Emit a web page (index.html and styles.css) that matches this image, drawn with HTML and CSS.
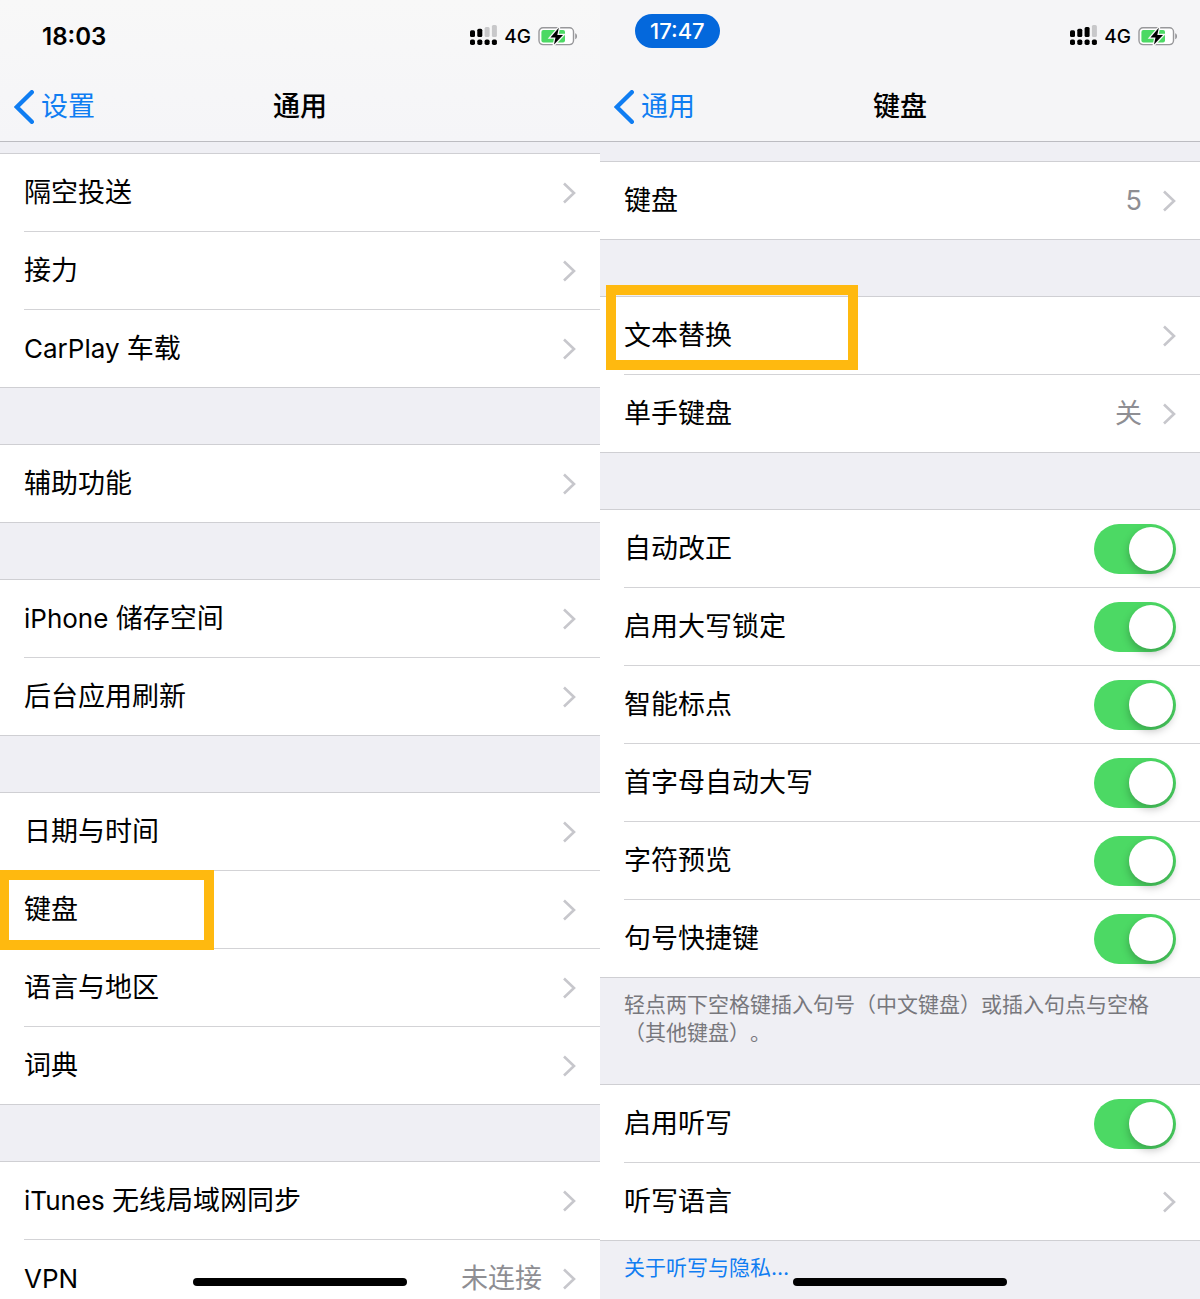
FILE: index.html
```
<!DOCTYPE html>
<html lang="zh-CN">
<head>
  <meta charset="UTF-8">
  <meta name="viewport" content="width=device-width, initial-scale=1">
  <title>通用 / 键盘</title>
  <link rel="stylesheet" href="styles.css">
</head>
<body>
  <!-- shared icons -->
  <svg class="sprite" aria-hidden="true">
    <symbol id="chevron" viewBox="0 0 14 22">
      <path d="M2 1.500l10 9.500-10 9.500" fill="none" stroke="currentColor" stroke-width="2.6"/>
    </symbol>
    <symbol id="back" viewBox="0 0 20 34">
      <path d="M17.8 2.2L2.8 17l15 14.8" fill="none" stroke="currentColor" stroke-width="4.4" stroke-linecap="round"/>
    </symbol>
    <symbol id="battery" viewBox="0 0 40 20">
      <rect x="1" y="1.8" width="34.5" height="16.8" rx="4" fill="#fff" stroke="#98989b" stroke-width="1.4"/>
      <path d="M37.200 7.2c1.400.6 1.800 1.7 1.800 3s-.4 2.400-1.800 3z" fill="#98989b"/>
      <rect x="3.400" y="4" width="23.600" height="12.400" rx="2" fill="#4cd964"/>
      <path d="M20.800 1.800L12.500 11.400h5L16 18.600 25 9h-5.700z" fill="#000" stroke="#f7f7f8" stroke-width="2.600" paint-order="stroke"/>
    </symbol>
  </svg>

  <main class="screens">
    <section class="phone phone-general">
      <header class="header">
        <div class="status">
          <span class="time">18:03</span>
          <div class="status-icons">
            <svg class="signal" viewBox="0 0 27 22">
              <rect x="0" y="5.3" width="5" height="6.7" rx="1.5"/>
              <rect x="7.3" y="3.7" width="5" height="8.3" rx="1.5"/>
              <rect class="off" x="14.6" y="2" width="5" height="10" rx="1.5"/>
              <rect class="off" x="21.9" y="0" width="5" height="12" rx="1.5"/>
              <rect x="0" y="14.5" width="5" height="5.5" rx="1.8"/>
              <rect x="7.3" y="14.5" width="5" height="5.5" rx="1.8"/>
              <rect x="14.6" y="14.5" width="5" height="5.5" rx="1.8"/>
              <rect x="21.9" y="14.5" width="5" height="5.5" rx="1.8"/>
            </svg>
            <span class="network">4G</span>
            <svg class="battery"><use href="#battery"/></svg>
          </div>
        </div>
        <nav class="navbar">
          <a class="back" href="#"><svg><use href="#back"/></svg>设置</a>
          <h1>通用</h1>
        </nav>
      </header>

      <div class="list">
        <ul class="group">
          <li><a class="row" href="#">隔空投送<svg class="chevron"><use href="#chevron"/></svg></a></li>
          <li><a class="row" href="#">接力<svg class="chevron"><use href="#chevron"/></svg></a></li>
          <li><a class="row" href="#"><span><span class="latin">CarPlay </span>车载</span><svg class="chevron"><use href="#chevron"/></svg></a></li>
        </ul>
        <ul class="group">
          <li><a class="row" href="#">辅助功能<svg class="chevron"><use href="#chevron"/></svg></a></li>
        </ul>
        <ul class="group">
          <li><a class="row" href="#"><span><span class="latin">iPhone </span>储存空间</span><svg class="chevron"><use href="#chevron"/></svg></a></li>
          <li><a class="row" href="#">后台应用刷新<svg class="chevron"><use href="#chevron"/></svg></a></li>
        </ul>
        <ul class="group">
          <li><a class="row" href="#">日期与时间<svg class="chevron"><use href="#chevron"/></svg></a></li>
          <li class="marked mark-keyboard"><a class="row" href="#">键盘<svg class="chevron"><use href="#chevron"/></svg></a></li>
          <li><a class="row" href="#">语言与地区<svg class="chevron"><use href="#chevron"/></svg></a></li>
          <li><a class="row" href="#">词典<svg class="chevron"><use href="#chevron"/></svg></a></li>
        </ul>
        <ul class="group">
          <li><a class="row" href="#"><span><span class="latin">iTunes </span>无线局域网同步</span><svg class="chevron"><use href="#chevron"/></svg></a></li>
          <li><a class="row" href="#"><span class="latin">VPN</span><span class="value">未连接</span><svg class="chevron"><use href="#chevron"/></svg></a></li>
        </ul>
      </div>
      <div class="home-bar"></div>
    </section>

    <section class="phone phone-keyboard">
      <header class="header">
        <div class="status">
          <span class="time time-pill">17:47</span>
          <div class="status-icons">
            <svg class="signal" viewBox="0 0 27 22">
              <rect x="0" y="5.3" width="5" height="6.7" rx="1.5"/>
              <rect x="7.3" y="3.7" width="5" height="8.3" rx="1.5"/>
              <rect x="14.6" y="2" width="5" height="10" rx="1.5"/>
              <rect class="off" x="21.9" y="0" width="5" height="12" rx="1.5"/>
              <rect x="0" y="14.5" width="5" height="5.5" rx="1.8"/>
              <rect x="7.3" y="14.5" width="5" height="5.5" rx="1.8"/>
              <rect x="14.6" y="14.5" width="5" height="5.5" rx="1.8"/>
              <rect x="21.9" y="14.5" width="5" height="5.5" rx="1.8"/>
            </svg>
            <span class="network">4G</span>
            <svg class="battery"><use href="#battery"/></svg>
          </div>
        </div>
        <nav class="navbar">
          <a class="back" href="#"><svg><use href="#back"/></svg>通用</a>
          <h1>键盘</h1>
        </nav>
      </header>

      <div class="list">
        <ul class="group">
          <li><a class="row" href="#">键盘<span class="value">5</span><svg class="chevron"><use href="#chevron"/></svg></a></li>
        </ul>
        <ul class="group">
          <li class="marked mark-replace"><a class="row" href="#">文本替换<svg class="chevron"><use href="#chevron"/></svg></a></li>
          <li><a class="row" href="#">单手键盘<span class="value">关</span><svg class="chevron"><use href="#chevron"/></svg></a></li>
        </ul>
        <ul class="group">
          <li><label class="row">自动改正<input class="switch" type="checkbox" checked></label></li>
          <li><label class="row">启用大写锁定<input class="switch" type="checkbox" checked></label></li>
          <li><label class="row">智能标点<input class="switch" type="checkbox" checked></label></li>
          <li><label class="row">首字母自动大写<input class="switch" type="checkbox" checked></label></li>
          <li><label class="row">字符预览<input class="switch" type="checkbox" checked></label></li>
          <li><label class="row">句号快捷键<input class="switch" type="checkbox" checked></label></li>
        </ul>
        <p class="footnote">轻点两下空格键插入句号（中文键盘）或插入句点与空格（其他键盘）。</p>
        <ul class="group">
          <li><label class="row">启用听写<input class="switch" type="checkbox" checked></label></li>
          <li><a class="row" href="#">听写语言<svg class="chevron"><use href="#chevron"/></svg></a></li>
        </ul>
        <p class="footnote"><a href="#">关于听写与隐私…</a></p>
      </div>
      <div class="home-bar"></div>
    </section>
  </main>
</body>
</html>
```

FILE: styles.css
```
*,
*::before,
*::after {
  box-sizing: border-box;
}

body {
  margin: 0;
  font-family: Inter, "Noto Sans CJK SC", sans-serif;
  font-size: 27px;
  line-height: 36px;
  color: #000;
  background: #efeff4;
}

a {
  color: #0f7df2;
  text-decoration: none;
}

.sprite {
  position: absolute;
  width: 0;
  height: 0;
}

.screens {
  display: grid;
  grid-template-columns: 1fr 1fr;
}

.phone {
  position: relative;
  display: flex;
  flex-direction: column;
  height: 100vh;
  min-width: 0;
  overflow: hidden;
  background: #efeff4;
}

/* Header */
.header {
  flex: none;
  background: #f5f5f7;
  border-bottom: 1px solid #bcbcc1;
}

.phone-general .header {
  background: linear-gradient(#f8f8f8, #f5f5f8);
}

.status {
  display: flex;
  justify-content: space-between;
  align-items: flex-start;
  height: 71px;
  padding: 14px 22px 0 35px;
}

.time {
  padding: 6px 7px;
  font-size: 24px;
  font-weight: 600;
  line-height: 34px;
}

.time-pill {
  padding: 0 15px;
  border-radius: 17px;
  font-size: 22px;
  font-weight: 500;
  color: #fff;
  background: #0468dc;
}

.status-icons {
  display: flex;
  align-items: center;
  gap: 7px;
  height: 44px;
}

.signal {
  width: 27px;
  height: 22px;
}

.signal .off {
  fill: #c8c8ca;
}

.network {
  padding-top: 2px;
  font-size: 19px;
  font-weight: 500;
  line-height: 24px;
}

.battery {
  width: 40px;
  height: 20px;
}

.navbar {
  display: grid;
  grid-template-columns: 1fr auto 1fr;
  align-items: center;
  height: 70px;
  padding: 1px 14px 0;
}

.back {
  display: flex;
  align-items: center;
  gap: 7px;
}

.back svg {
  width: 20px;
  height: 34px;
}

.navbar h1 {
  margin: 0;
  font-size: 27px;
  font-weight: 500;
}

/* Settings list */
.list {
  flex: 1;
  min-height: 0;
  padding-top: 11px;
  overflow: hidden auto;
  scrollbar-width: none;
}

.phone-keyboard .list {
  padding-top: 19px;
}

.group {
  margin: 0;
  padding: 0 0 0 24px;
  list-style: none;
  background: #fff;
  border-top: 1px solid #cfcfd3;
  border-bottom: 1px solid #cfcfd3;
}

.group + .group {
  margin-top: 56px;
}

.group li + li {
  border-top: 1px solid #d3d3d6;
}

.row {
  display: flex;
  align-items: center;
  min-height: 77px;
  padding-right: 24px;
  color: #000;
}

.latin {
  font-size: 26px;
}

.value {
  margin-left: auto;
  color: #8e8e93;
}

.chevron {
  flex: none;
  width: 14px;
  height: 22px;
  margin-left: auto;
  color: #c7c7cc;
}

.value + .chevron {
  margin-left: 20px;
}

.footnote {
  margin: 0;
  padding: 13px 24px 0;
  font-size: 21px;
  line-height: 28px;
  color: #77777c;
  text-spacing-trim: space-all;
}

.footnote + .group {
  margin-top: 37px;
}

/* Switch */
.switch {
  appearance: none;
  flex: none;
  width: 82px;
  height: 50px;
  margin: 0 0 0 auto;
  padding: 3px;
  border-radius: 25px;
  background: #c7c7cc;
}

.switch::before {
  content: "";
  display: block;
  width: 44px;
  height: 44px;
  border-radius: 50%;
  background: #fff;
  box-shadow: 0 4px 8px rgba(0, 0, 0, 0.25);
}

.switch:checked {
  background: #4cd964;
}

.switch:checked::before {
  margin-left: auto;
}

/* Yellow marker over a row */
.marked {
  position: relative;
}

.marked::after {
  content: "";
  position: absolute;
  z-index: 1;
  border: 10px solid #ffb90f;
  pointer-events: none;
}

.mark-keyboard::after {
  top: -1px;
  left: -25px;
  width: 215px;
  height: 80px;
}

.mark-replace::after {
  top: -12px;
  left: -18px;
  width: 252px;
  height: 85px;
}

.home-bar {
  position: absolute;
  z-index: 2;
  bottom: 13px;
  left: 50%;
  width: 214px;
  height: 8px;
  border-radius: 4px;
  background: #000;
  transform: translateX(-50%);
}
```
